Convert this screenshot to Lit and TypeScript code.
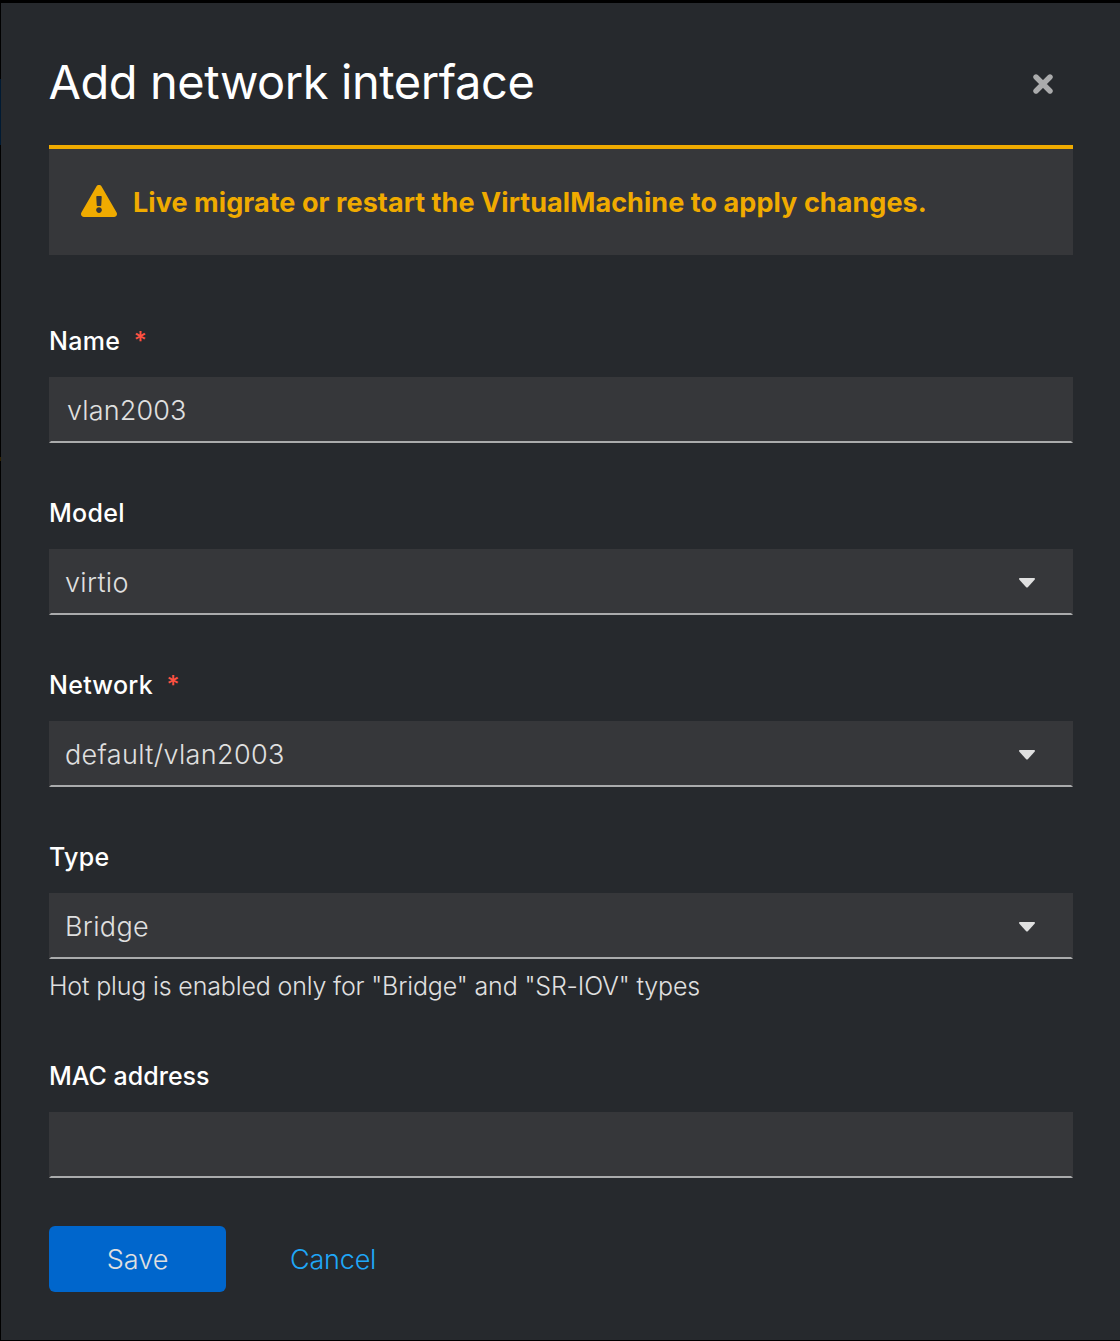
import { LitElement, html, css, nothing } from "lit";
import { customElement, property } from "lit/decorators.js";

@customElement("form-field")
class FormField extends LitElement {
  @property() label = "";
  @property() value = "";
  @property() kind = "text";
  @property() helper = "";
  @property({ type: Boolean }) required = false;

  static styles = css`
    :host { display: block; }
    .label { display: flex; align-items: center; height: 72px; color: #fff; font-size: 25px; font-weight: 500; letter-spacing: 0.28px; white-space: pre; }
    :host(.tight) .label { letter-spacing: 0; }
    .star { color: #fe5142; margin-left: 13.5px; letter-spacing: 0; }
    .control { box-sizing: border-box; height: 66px; display: flex; align-items: center; justify-content: space-between;
      background: #36373a; border: 2px solid transparent; border-bottom-color: #aaabac;
      color: #e0e0e0; font-size: 27px; font-weight: 300; letter-spacing: 0.34px; padding: 0 36px 0 14px; white-space: pre; }
    .control.text { letter-spacing: 0.15px; padding-left: 16px; }
    .caret { display: block; width: 16px; height: 10px; margin-top: 2px; }
    .helper { padding: 8px 0 1px; line-height: 38px; color: #e0e0e0; font-size: 25px; font-weight: 300; letter-spacing: -0.16px; white-space: pre; }
  `;

  render() {
    return html`
      <div class="label"><span>${this.label}</span>${this.required ? html`<span class="star">*</span>` : nothing}</div>
      <div class="control ${this.kind}">
        <span>${this.value}</span>
        ${this.kind === "select"
          ? html`<svg class="caret" viewBox="0 0 16 10"><path d="M.8 0h14.4q1.3.5.4 1.7L8.8 9.2q-.8.8-1.6 0L.4 1.7Q-.5.5.8 0z" fill="#e0e0e0" /></svg>`
          : nothing}
      </div>
      ${this.helper ? html`<div class="helper">${this.helper}</div>` : nothing}
    `;
  }
}

@customElement("app-root")
class AppRoot extends LitElement {
  static styles = css`
    :host { display: block; font-family: Inter, "Liberation Sans", sans-serif; }
    .page { box-sizing: border-box; height: 1341px; padding: 3px 0 1px 1px;
      background: linear-gradient(#001a33, #001a33) 0 79px / 1px 66px no-repeat, linear-gradient(#302200, #302200) 0 457px / 1px 4px no-repeat, #000; }
    .modal { box-sizing: border-box; height: 1337px; background: #26292d; padding: 0 47px 0 48px; }
    .head { display: flex; align-items: center; justify-content: space-between; height: 142px; padding: 18px 20px 0 0; box-sizing: border-box; }
    .title { margin: 0 0 3px -0.5px; color: #fff; font-size: 47px; line-height: 56px; font-weight: 400; letter-spacing: -0.43px; white-space: pre; }
    .close { width: 20px; height: 20px; display: block; margin-top: 2px; }
    .alert { box-sizing: border-box; height: 110px; border-top: 4px solid #f0ab00; background: #36373a; display: flex; align-items: center; gap: 16px; padding: 0 32px; color: #f0ab00; font-size: 27px; font-weight: 700; letter-spacing: 0.06px; white-space: pre; }
    .warn { width: 36px; height: 32px; display: block; margin-bottom: 2px; }
    .form { display: grid; gap: 34px; padding-top: 50px; }
    .actions { display: flex; gap: 64px; align-items: center; margin-top: 48px; font-size: 27px; font-weight: 300; }
    .btn { font: inherit; border: 0; background: none; padding: 0; height: 66px; white-space: pre; }
    .save { width: 177px; border-radius: 6px; background: #0066cc; color: #e0e0e0; }
    .cancel { color: #1fa7f8; letter-spacing: -0.2px; }
  `;

  render() {
    return html`
      <div class="page">
        <div class="modal">
          <div class="head">
            <h1 class="title">Add network interface</h1>
            <svg class="close" viewBox="0 0 20 20"><path d="M3 3l14 14M17 3L3 17" stroke="#aaabac" stroke-width="5.4" stroke-linecap="round" /></svg>
          </div>
          <div class="alert">
            <svg class="warn" viewBox="0 0 576 512"><path fill="#f0ab00" d="M569.517 440.013C587.975 472.007 564.806 512 527.94 512H48.054c-36.937 0-59.999-40.055-41.577-71.987L246.423 23.985c18.467-32.009 64.72-31.951 83.154 0l239.94 416.028zM288 354c-25.405 0-46 20.595-46 46s20.595 46 46 46 46-20.595 46-46-20.595-46-46-46zm-43.673-165.346l7.418 136c.347 6.364 5.609 11.346 11.982 11.346h48.546c6.373 0 11.635-4.982 11.982-11.346l7.418-136c.375-6.874-5.098-12.654-11.982-12.654h-63.383c-6.884 0-12.356 5.78-11.981 12.654z" /></svg>
            <span>Live migrate or restart the VirtualMachine to apply changes.</span>
          </div>
          <div class="form">
            <form-field label="Name" value="vlan2003" required></form-field>
            <form-field label="Model" value="virtio" kind="select"></form-field>
            <form-field label="Network" value="default/vlan2003" kind="select" required></form-field>
            <form-field label="Type" value="Bridge" kind="select" helper='Hot plug is enabled only for "Bridge" and "SR-IOV" types'></form-field>
            <form-field class="tight" label="MAC address"></form-field>
          </div>
          <div class="actions">
            <button class="btn save">Save</button>
            <button class="btn cancel">Cancel</button>
          </div>
        </div>
      </div>
    `;
  }
}
